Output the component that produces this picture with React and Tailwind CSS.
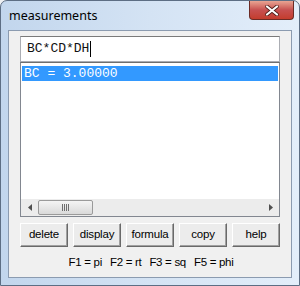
export default function App() {
  const buttons = ['delete', 'display', 'formula', 'copy', 'help']
  return (
    <div className="w-[300px] h-[286px] bg-[#eef0f3]">
      <div className="flex h-[286px] w-[300px] flex-col rounded-t-[7px] border border-[#5d6e84] bg-gradient-to-r from-[#c2d6ed] via-[#d4e3f4] to-[#e3eefa]">
        {/* title bar */}
        <div className="flex h-[29px] items-start justify-between">
          <span className="mt-[6px] ml-[8px] text-[12.5px] text-black [font-family:'Noto_Sans',sans-serif]">
            measurements
          </span>
          <div className="mr-[5px] flex h-[19px] w-[45px] items-center justify-center rounded-b-[4px] border border-t-0 border-[#6b2b25] bg-gradient-to-b from-[#e8a493] via-[#c75050] to-[#c43c2c]">
            <svg width="14" height="11" viewBox="0 0 14 11">
              <path d="M2 1.5 L12 9.5 M12 1.5 L2 9.5" stroke="#4a1a14" strokeWidth="3.6" strokeLinecap="round" />
              <path d="M2 1.5 L12 9.5 M12 1.5 L2 9.5" stroke="#ffffff" strokeWidth="2.2" strokeLinecap="round" />
            </svg>
          </div>
        </div>

        {/* client area */}
        <div className="mx-[7px] flex h-[248px] flex-col border border-[#8b9bb0] bg-[#f0f0f0] px-[11px] pt-[5px]">
          <div className="flex h-[26px] items-center border border-[#abadb3] border-t-[#7a7a7a] bg-white pl-[6px] text-[13px] text-[#111] [font-family:'Liberation_Mono',monospace]">
            BC*CD*DH<span className="ml-[1px] h-[16px] w-[1px] bg-black" />
          </div>

          <div className="flex h-[155px] flex-col border border-[#828790] border-t-[#6f6f6f] bg-white">
            <div className="flex-1 px-[1px] pt-[3px]">
              <div className="flex h-[15px] items-center bg-[#3399ff] pl-[2px] text-[13px] leading-none text-white [font-family:'Liberation_Mono',monospace]">
                BC = 3.00000
              </div>
            </div>
            {/* horizontal scrollbar */}
            <div className="flex h-[17px] items-center bg-[#ececec]">
              <div className="flex w-[17px] items-center justify-center">
                <svg width="4" height="7" viewBox="0 0 4 7">
                  <path d="M4 0 L0 3.5 L4 7 Z" fill="#505050" />
                </svg>
              </div>
              <div className="flex h-[15px] w-[55px] items-center justify-center rounded-[2px] border border-[#9a9a9a] bg-gradient-to-b from-[#f4f4f4] to-[#d9d9d9]">
                <div className="flex gap-[1px]">
                  <span className="h-[7px] w-[1px] bg-[#6e6e6e]" />
                  <span className="h-[7px] w-[1px] bg-[#6e6e6e]" />
                  <span className="h-[7px] w-[1px] bg-[#6e6e6e]" />
                  <span className="h-[7px] w-[1px] bg-[#6e6e6e]" />
                </div>
              </div>
              <div className="flex-1" />
              <div className="flex w-[17px] items-center justify-center">
                <svg width="4" height="7" viewBox="0 0 4 7">
                  <path d="M0 0 L4 3.5 L0 7 Z" fill="#505050" />
                </svg>
              </div>
            </div>
          </div>

          <div className="mt-[6px] flex justify-between">
            {buttons.map((b) => (
              <div
                key={b}
                className="flex h-[24px] w-[48px] items-center justify-center border border-t-white border-l-white border-r-[#696969] border-b-[#696969] bg-[#ececec] text-[11.5px] tracking-[-0.2px] text-black shadow-[inset_-1px_-1px_0_#a0a0a0] [font-family:'Liberation_Sans',sans-serif]"
              >
                {b}
              </div>
            ))}
          </div>

          <div className="mt-[7px] flex justify-center gap-[8px] pl-[2px] text-[11.5px] tracking-[-0.3px] text-black [font-family:'Liberation_Sans',sans-serif]">
            <span>F1 = pi</span>
            <span>F2 = rt</span>
            <span>F3 = sq</span>
            <span>F5 = phi</span>
          </div>
        </div>
      </div>
    </div>
  )
}
